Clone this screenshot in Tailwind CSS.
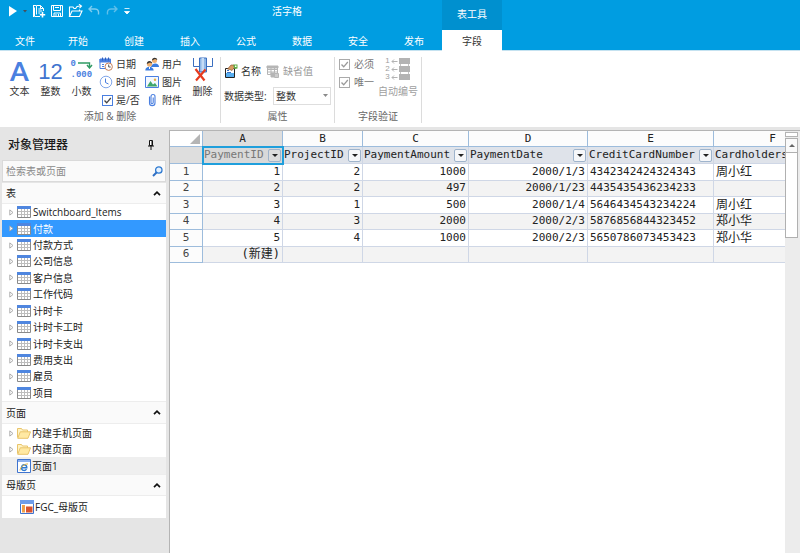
<!DOCTYPE html>
<html lang="zh-CN">
<head>
  <meta charset="UTF-8" />
  <title>活字格</title>
  <meta name="viewport" content="width=device-width, initial-scale=1.0" />
  <script src="https://cdn.jsdelivr.net/npm/@tailwindcss/browser@4"></script>
</head>
<body class="h-screen flex flex-col overflow-hidden bg-[#e5e5e5] text-[#333] text-[10px] leading-[14px] font-['Open_Sans','Noto_Sans_CJK_SC',sans-serif]">

  <!-- shared icons -->
  <svg class="hidden">
    <symbol id="i-table" viewBox="0 0 14 12">
      <path d="M.5.5h13v11H.5z" fill="#fff" stroke="#8a8a8a"/>
      <path d="M0 0h14v3H0z" fill="#4f86df"/>
      <path d="M1 5.500h12M1 8.500h12M4.500 3v8M7.500 3v8M10.500 3v8" stroke="#bdbdbd" fill="none"/>
    </symbol>
    <symbol id="i-folder" viewBox="0 0 14 12">
      <path d="M.5 10.500v-9h4l1 1.500h5v2" fill="#fff3c4" stroke="#e9c46a"/>
      <path d="M.7 11.300L3.300 4.800h10.200L11 11.300z" fill="#ffe9a3" stroke="#e9c46a"/>
    </symbol>
    <symbol id="i-arrow" viewBox="0 0 5 7">
      <path d="M.8.9L4 3.500.8 6.100z" fill="#fff" stroke="#a5a5a5" stroke-width=".9"/>
    </symbol>
    <symbol id="i-up" viewBox="0 0 8 5">
      <path d="M1 4.200L4 1.200l3 3" fill="none" stroke="#111" stroke-width="1.700"/>
    </symbol>
    <symbol id="i-check" viewBox="0 0 11 11">
      <path d="M2.500 5.500l2.200 2.300L8.800 3" fill="none" stroke="currentColor" stroke-width="1.300"/>
    </symbol>
  </svg>

  <header class="relative shrink-0 bg-[#009de1] text-white border-b border-[#c5e2f0]">
    <div class="h-[30px] flex items-start">
      <div class="flex items-center gap-1 h-[22px] pl-2 w-[272px]">
        <button aria-label="运行" class="w-[10px] h-4"><svg viewBox="0 0 10 16" class="w-[10px] h-4"><path d="M1 3l8 5-8 5.500z" fill="#fff"/></svg></button>
        <button aria-label="运行选项" class="w-[6px] h-4"><svg viewBox="0 0 6 16" class="w-[6px] h-4"><path d="M1 7h4L3 9.500z" fill="#45505a"/></svg></button>
        <button aria-label="新建" class="w-[14px] h-[14px]"><svg viewBox="0 0 14 14" class="w-[14px] h-[14px]" fill="none" stroke="#fff"><path d="M8 12.500H2.500V3.500M4.500 10.500v-9h4l3 3v2.500M6.300 5h3M6.300 7h4M6.300 9h2M2 1.500h2M8.500 1.500v3h3M1.500 1v12"/><path d="M10.500 8v5.500M7.800 10.800h5.400" stroke-width="1.600"/></svg></button>
        <button aria-label="保存" class="w-[14px] h-[14px]"><svg viewBox="0 0 14 14" class="w-[14px] h-[14px]" fill="none" stroke="#fff"><path d="M1.500 1.500h11v11h-11zM3.500 1.500v5h7v-5M4 12.500V9h6.500v3.500M5 3.500h4M6 10v2.500M8.500 10v2.500"/></svg></button>
        <button aria-label="打开" class="w-[15px] h-[14px]"><svg viewBox="0 0 15 14" class="w-[15px] h-[14px]" fill="none" stroke="#fff" stroke-width="1.100"><path d="M1.500 12.500V3h3.500l1 1.500h2M1.500 12.500L4 7h10l-2.500 5.500zM11.500 7V5.500M8 4.500C8 2.500 9.500 1.800 13 2M11 .3L13.500 2 11.500 4.200"/></svg></button>
        <button aria-label="撤销" class="w-[14px] h-[14px]"><svg viewBox="0 0 14 14" class="w-[14px] h-[14px]" fill="none" stroke="#7fcdf0" stroke-width="1.400"><path d="M5 2L2 5l3 3M2 5h6c3 0 4 2 3.500 5.500"/></svg></button>
        <button aria-label="重做" class="w-[14px] h-[14px]"><svg viewBox="0 0 14 14" class="w-[14px] h-[14px]" fill="none" stroke="#5fbfea" stroke-width="1.400"><path d="M9 2l3 3-3 3M12 5H6C3 5 2 7 2.500 10.500"/></svg></button>
        <button aria-label="自定义" class="w-[8px] h-[14px]"><svg viewBox="0 0 8 14" class="w-[8px] h-[14px]"><path d="M1.500 4.500h5M1.500 7.500h5L4 10z" fill="#fff" stroke="#fff" stroke-width=".8"/></svg></button>
      </div>
      <h1 class="w-[170px] pt-1">活字格</h1>
      <div class="w-[60px] h-[30px] bg-[#0090cf] pt-[7px] text-center">表工具</div>
    </div>
    <nav class="h-5 flex text-center leading-[22px]">
      <button class="w-[50px]">文件</button>
      <button class="w-[56px]">开始</button>
      <button class="w-[56px]">创建</button>
      <button class="w-[56px]">插入</button>
      <button class="w-[56px]">公式</button>
      <button class="w-[56px]">数据</button>
      <button class="w-[56px]">安全</button>
      <button class="w-[56px]">发布</button>
      <button class="w-[60px] h-[21px] bg-white text-[#333]">字段</button>
    </nav>
  </header>

  <!-- ribbon -->
  <section class="shrink-0 h-[76px] flex pt-[6px] pb-1 bg-white">
    <div class="w-[221px] flex flex-col justify-between border-r border-[#dcdcdc]">
      <div class="flex pl-1">
        <button class="w-[31px] flex flex-col items-center">
          <span class="h-[27px] leading-[27px] text-[27px] font-bold text-[#4a80e0] font-['Lato']">A</span><span>文本</span>
        </button>
        <button class="w-[31px] flex flex-col items-center">
          <span class="h-[27px] leading-[30px] text-[22px] text-[#3f74cf] font-['Liberation_Sans']">12</span><span>整数</span>
        </button>
        <button class="w-[31px] flex flex-col items-center">
          <span class="relative h-[27px] w-[22px] pt-[2px] text-left text-[9px] leading-[11px] font-bold text-[#4a80e0] font-['Liberation_Mono']">0<br>.000<svg viewBox="0 0 15 8" class="absolute left-[7px] top-1 w-[15px] h-2" fill="none" stroke="#2f9a63" stroke-width="1.400"><path d="M0 2h11.500v4.500M9 4l2.500 3L14 4"/></svg></span><span>小数</span>
        </button>
        <div class="w-[46px] ml-[2px] flex flex-col gap-1 whitespace-nowrap">
          <button class="flex items-center gap-[3px]">
            <svg viewBox="0 0 14 14" class="w-[14px] h-[14px]"><path d="M1 2h10.500v9.500H1z" fill="#fff" stroke="#4a7fe0"/><path d="M.5 2h11.500v3.500H.5z" fill="#4a7fe0"/><path d="M3.500.5v3M6.500.5v3M9.500.5v3" stroke="#2d5fc0"/><path d="M3 7.500h2M3 9.500h2" stroke="#4a7fe0"/><circle cx="9.700" cy="9.700" r="3.700" fill="#fff" stroke="#c77f5a"/><path d="M9.700 7.500v2.500h2" fill="none" stroke="#555"/></svg>日期</button>
          <button class="flex items-center gap-[3px]">
            <svg viewBox="0 0 14 14" class="w-[14px] h-[14px]" fill="none" stroke="#4a7fe0"><circle cx="7" cy="7" r="5.800" stroke="#82a7ea"/><path d="M6.500 3.500v4l3 1.500"/></svg>时间</button>
          <label class="flex items-center gap-[3px]"><span class="relative w-[14px] h-[14px] flex items-center justify-end text-[#444]"><input type="checkbox" checked class="appearance-none w-[11px] h-[11px] border border-[#4a7fe0] bg-white"><svg class="absolute right-0 w-[11px] h-[11px] pointer-events-none"><use href="#i-check"/></svg></span>是/否</label>
        </div>
        <div class="w-[42px] flex flex-col gap-1 whitespace-nowrap">
          <button class="flex items-center gap-[3px]">
            <svg viewBox="0 0 14 14" class="w-[14px] h-[14px]"><circle cx="9.500" cy="3.500" r="2.500" fill="#f0b070"/><path d="M7 3.500C7 0 12 0 12.300 3L10 2z" fill="#333"/><path d="M6 10c0-4 7.500-5 8-.5V10z" fill="#3b7de0"/><circle cx="4.500" cy="7" r="2.600" fill="#f0b070"/><path d="M1.800 7c0-4 5-4 5.500-.5L5 5.500z" fill="#333"/><path d="M.3 13.500c0-5 8-5 8.400 0z" fill="#3b7de0"/><path d="M4.500 10v2" stroke="#fff"/></svg>用户</button>
          <button class="flex items-center gap-[3px]">
            <svg viewBox="0 0 14 14" class="w-[14px] h-[14px]"><path d="M.5 1.500h13v11H.5z" fill="#f3f8ff" stroke="#4a7fe0"/><path d="M2 11.500L5.500 6l2.500 3.500L10 8l2.500 3.500z" fill="#3fa66c"/><circle cx="10" cy="4.700" r="1.200" fill="#e8ae3f"/></svg>图片</button>
          <button class="flex items-center gap-[3px]">
            <svg viewBox="0 0 14 14" class="w-[14px] h-[14px]" fill="none" stroke="#4a7fe0" stroke-width="1.100"><path d="M4.500 3.500V10c0 3.500 5.500 3.500 5.500 0V3.500C10 .8 6 .8 6 3.500V9.500c0 1.600 2.200 1.600 2.200 0V4.500"/></svg>附件</button>
        </div>
        <button class="w-[31px] flex flex-col items-center">
          <svg viewBox="0 0 20 27" class="w-5 h-[27px]"><path d="M.5 1v8.500H6M19.500 1v8.500H14" fill="none" stroke="#3b6fc0"/><path d="M6.500 1h7v14h-7z" fill="#8fb8e8" stroke="#3b6fc0"/><path d="M8.500 1h2.500v13H8.500z" fill="#c5dcf5"/><path d="M2.500 12l9 11.500M12.500 12.500L3 23.500" stroke="#e63a1e" stroke-width="2.200"/></svg><span>删除</span>
        </button>
      </div>
      <div class="text-center text-[#666]">添加 &amp; 删除</div>
    </div>

    <div class="w-[114px] flex flex-col justify-between border-r border-[#dcdcdc]">
      <div class="pl-[3px] pt-[6px] flex flex-col gap-2">
        <div class="flex items-center gap-[5px] h-4">
          <button class="flex items-center gap-[3px]">
            <svg viewBox="0 0 14 14" class="w-[14px] h-[14px]"><path d="M1.500 4.500h9v9h-9z" fill="#fff" stroke="#222"/><path d="M2 9h8v4H2z" fill="#58aef0"/><path d="M3 6.500h2M3 9l1-1 1 1 1-1 1 1" stroke="#3b6fc0" fill="none"/><path d="M3.500 5L7 1h3l1 2-3 3.500-2-1z" fill="#d99a62" stroke="#7a4a25" stroke-width=".6"/><path d="M9.500.5h4v4l-2.500.5-1.500-2z" fill="#5fae45"/><path d="M11 1.500h1.500V3H11z" fill="#fff"/></svg>名称</button>
          <button disabled class="flex items-center gap-[3px] text-[#9a9a9a]">
            <svg viewBox="0 0 14 14" class="w-[14px] h-[14px]" fill="none" stroke="#b5b5b5"><path d="M1.500 2.500h10v8h-10zM1.500 5.500h10M1.500 8h10M5 3v8M8.500 3v8"/><path d="M1 2h11v2H1zM5 9h3v4H5z" fill="#b5b5b5"/><path d="M8.500 9.500h4v4h-4z" fill="#ccc"/></svg>缺省值</button>
        </div>
        <div class="flex items-center gap-[6px] whitespace-nowrap">
          <label for="dtype" class="w-[43px]">数据类型:</label>
          <div class="relative">
            <select id="dtype" class="appearance-none block w-[58px] h-[18px] pl-[2px] border border-[#dedede] bg-white"><option>整数</option></select>
            <svg viewBox="0 0 5 3" class="absolute right-[3px] top-[7px] w-[5px] h-[3px] pointer-events-none"><path d="M0 0h5L2.500 3z" fill="#8a8a8a"/></svg>
          </div>
        </div>
      </div>
      <div class="text-center text-[#666]">属性</div>
    </div>

    <div class="w-[87px] flex flex-col justify-between border-r border-[#dcdcdc]">
      <div class="flex pl-1">
        <div class="w-[39px] flex flex-col gap-1 text-[#777]">
          <label class="flex items-center gap-1"><span class="relative w-[11px] h-[11px] text-[#999]"><input type="checkbox" checked disabled class="appearance-none block w-[11px] h-[11px] border border-[#aaa] bg-white"><svg class="absolute left-0 top-0 w-[11px] h-[11px] pointer-events-none"><use href="#i-check"/></svg></span>必须</label>
          <label class="flex items-center gap-1"><span class="relative w-[11px] h-[11px] text-[#999]"><input type="checkbox" checked disabled class="appearance-none block w-[11px] h-[11px] border border-[#aaa] bg-white"><svg class="absolute left-0 top-0 w-[11px] h-[11px] pointer-events-none"><use href="#i-check"/></svg></span>唯一</label>
        </div>
        <button disabled class="w-[40px] flex flex-col items-center text-[#a0a0a0]">
          <span class="h-[27px] flex gap-px">
            <span class="flex flex-col text-[8px] leading-[8px] font-['Liberation_Sans']"><span>1</span><span>2</span><span>3</span></span>
            <svg viewBox="0 0 20 25" class="w-5 h-[25px]"><path d="M8 1h11v6H8zM8 9h11v6H8zM8 17h11v6H8z" fill="#b3b3b3"/><path d="M9.500 7v2M17.500 7v2M9.500 15v2M17.500 15v2" stroke="#c4c4c4"/><path d="M6.500 4.500H1M3 2.500l-2 2 2 2M6.500 12.500H1M3 10.500l-2 2 2 2M6.500 20.500H1M3 18.500l-2 2 2 2" fill="none" stroke="#b3b3b3"/></svg>
          </span>
          <span>自动编号</span>
        </button>
      </div>
      <div class="text-center text-[#666]">字段验证</div>
    </div>
  </section>

  <main class="flex-1 min-h-0 flex pt-[3px]">
    <!-- object manager -->
    <aside class="w-[169px] shrink-0 pl-[2px] pr-[3px] text-[#1a1a1a]">
      <div class="h-[30px] flex items-center justify-between pl-[6px] pr-3">
        <h2 class="text-[12px] font-medium">对象管理器</h2>
        <svg viewBox="0 0 6 10" class="w-[6px] h-[10px]"><path d="M1.500.5h3v5h-3z" fill="#fff" stroke="#111"/><path d="M3.500 1h1v5h-1z" fill="#111"/><path d="M0 6h6M3 6v4" stroke="#111"/></svg>
      </div>
      <div class="h-[22px] flex items-center bg-[#fafafa] border border-[#dadada] pl-[3px] pr-[2px]">
        <input type="text" aria-label="检索" placeholder="检索表或页面" class="flex-1 min-w-0 outline-none placeholder:text-[#8a8a8a]">
        <svg viewBox="0 0 11 11" class="w-[11px] h-[11px]" fill="none"><circle cx="6.800" cy="4" r="3.200" fill="#e6f2ff" stroke="#2f7ad0" stroke-width="1.300"/><path d="M4.500 6.500L1 10" stroke="#2f6fc4" stroke-width="2"/></svg>
      </div>
      <section class="mt-px">
        <h3 class="h-[21px] flex items-center justify-between pl-1 pr-[5px] bg-[#fafafa] border-b border-[#ededed]">表<svg class="w-2 h-[5px]"><use href="#i-up"/></svg></h3>
        <ul id="tables" class="h-[197px] flex flex-col bg-white"></ul>
      </section>
      <section>
        <h3 class="h-[23px] flex items-center justify-between pl-1 pr-[5px] bg-[#fafafa] border-y border-[#ededed]">页面<svg class="w-2 h-[5px]"><use href="#i-up"/></svg></h3>
        <ul class="bg-white pt-px">
          <li class="h-4 flex items-center pl-[7px]"><svg class="w-[5px] h-[7px] mr-[3px]"><use href="#i-arrow"/></svg><svg class="w-[14px] h-3 mr-px"><use href="#i-folder"/></svg>内建手机页面</li>
          <li class="h-4 flex items-center pl-[7px]"><svg class="w-[5px] h-[7px] mr-[3px]"><use href="#i-arrow"/></svg><svg class="w-[14px] h-3 mr-px"><use href="#i-folder"/></svg>内建页面</li>
          <li class="h-[17px] flex items-center pl-[15px] bg-[#efefef]">
            <svg viewBox="0 0 14 14" class="w-[14px] h-[14px] mr-px"><path d="M.5.5h13v13H.5z" fill="#fff" stroke="#3f74cf"/><path d="M1 1h12v2H1z" fill="#8db1ee"/><path d="M4.500 8.700h5.300c0-4-5.300-4-5.300 0 0 3.300 3.700 3.500 5 1.500" fill="none" stroke="#2f7ad0" stroke-width="1.400"/><path d="M3 11.500C3 8 8 4.500 11 5" fill="none" stroke="#e8b83f"/></svg>页面1</li>
        </ul>
      </section>
      <section>
        <h3 class="h-[22px] flex items-center justify-between pl-1 pr-[5px] bg-[#fafafa] border-y border-[#ededed]">母版页<svg class="w-2 h-[5px]"><use href="#i-up"/></svg></h3>
        <ul class="bg-white py-[3px]">
          <li class="h-4 flex items-center pl-[18px]">
            <svg viewBox="0 0 14 14" class="w-[14px] h-[14px] mr-px"><path d="M.5.5h13v13H.5z" fill="#fff" stroke="#3f74cf"/><path d="M0 0h14v4H0z" fill="#6f9dea"/><path d="M2 5h3v7.500H2z" fill="#f0a04a"/><path d="M6 6.500h6.500v6H6z" fill="#d9532f"/></svg>FGC_母版页</li>
        </ul>
      </section>
    </aside>

    <!-- data sheet -->
    <div class="flex-1 min-w-0 flex bg-white border-l border-t border-[#b4b4b4]">
      <div class="flex-1 min-w-0 overflow-hidden">
        <table class="table-fixed w-[662px] border-separate border-spacing-0 font-['DejaVu_Sans_Mono','Noto_Sans_CJK_SC',monospace] text-[11px] leading-[12px] text-[#222] whitespace-nowrap">
          <colgroup><col class="w-[33px]"><col class="w-[80px]"><col class="w-[80px]"><col class="w-[106px]"><col class="w-[119px]"><col class="w-[126px]"><col class="w-[118px]"></colgroup>
          <thead id="head" class="h-8"></thead>
          <tbody id="rows" class="h-[99px]"></tbody>
        </table>
      </div>
      <div class="w-[15px] shrink-0 flex flex-col bg-[#ececec]">
        <div class="h-[5px] mr-[2px] mt-[1px] bg-white border border-[#b4b4b4]"></div>
        <button aria-label="向上滚动" class="h-[15px] mr-[2px] mt-px flex items-center justify-center bg-[#fafafa] border border-[#b0b0b0]"><svg viewBox="0 0 6 3" class="w-[6px] h-[3px]"><path d="M0 3h6L3 0z" fill="#666"/></svg></button>
        <div class="h-[85px] mr-[2px] bg-white border border-t-0 border-[#b0b0b0]"></div>
      </div>
    </div>
  </main>

  <script>
    const tables = ['Switchboard_Items', '付款', '付款方式', '公司信息', '客户信息', '工作代码', '计时卡', '计时卡工时', '计时卡支出', '费用支出', '雇员', '项目'];
    document.getElementById('tables').innerHTML = tables.map(name => `
      <li class="flex-1 flex items-center pl-[7px] ${name === '付款' ? 'bg-[#3399ff] text-white' : ''}">
        <svg class="w-[5px] h-[7px] mr-[3px]"><use href="#i-arrow"/></svg><svg class="w-[14px] h-3 mr-[2px]"><use href="#i-table"/></svg>${name}
      </li>`).join('');

    const fields = ['PaymentID', 'ProjectID', 'PaymentAmount', 'PaymentDate', 'CreditCardNumber', 'Cardholders'];
    const data = [
      ['1', '2', '1000', '2000/1/3', '4342342424324343', '周小红'],
      ['2', '2', '497', '2000/1/23', '4435435436234233', ''],
      ['3', '1', '500', '2000/1/4', '5646434543234224', '周小红'],
      ['4', '3', '2000', '2000/2/3', '5876856844323452', '郑小华'],
      ['5', '4', '1000', '2000/2/3', '5650786073453423', '郑小华'],
      ['(新建)', '', '', '', '', '']
    ];

    document.getElementById('head').innerHTML = `
      <tr class="h-4">
        <th class="p-0 align-bottom border-r border-b border-[#9dbcdc]"><svg viewBox="0 0 10 10" class="w-[10px] h-[10px] ml-auto mr-[2px] mb-[2px]"><path d="M10 0v10H0z" fill="#b5b5b5"/></svg></th>
        ${fields.map((f, i) => `<th class="p-0 font-normal border-r border-b border-[#9dbcdc] ${i === 0 ? 'bg-[#dedede]' : 'bg-[#fcfcfc]'}">${'ABCDEF'[i]}</th>`).join('')}
      </tr>
      <tr class="h-[17px]">
        <th class="p-0 bg-[#dedede] border-r border-b border-[#9dbcdc]"></th>
        ${fields.map((f, i) => `
          <th class="p-0 font-normal border-r border-b border-[#cfd7e6] ${i === 0 ? 'bg-[#d9d9d9] text-[#777] outline-2 -outline-offset-1 outline-[#1f9fdc]' : 'bg-[#dfe3ea]'}">
            <div class="flex items-center justify-between pl-px pr-px">${f}
              <button aria-label="筛选" class="w-[13px] h-[13px] flex items-center justify-center border border-[#9fb4cc] rounded-xs ${i === 0 ? 'bg-[#dcdcdc]' : 'bg-[#f6f7f9]'}"><svg viewBox="0 0 6 3" class="w-[6px] h-[3px]"><path d="M0 0h6L3 3z" fill="#222"/></svg></button>
            </div>
          </th>`).join('')}
      </tr>`;

    document.getElementById('rows').innerHTML = data.map((row, r) => `
      <tr class="${r % 2 ? 'bg-[#f3f3f3]' : 'bg-white'}">
        <th class="p-0 font-normal text-[#444] bg-[#fcfcfc] border-r border-b border-[#9dbcdc]">${r + 1}</th>
        ${row.map((v, c) => `<td class="py-0 px-[2px] border-r border-b border-[#cfd7e6] ${c < 4 ? 'text-right' : 'text-left'} ${/[\u4e00-\u9fff]/.test(v) ? 'text-[12px]' : ''}">${v}</td>`).join('')}
      </tr>`).join('');
  </script>
</body>
</html>
